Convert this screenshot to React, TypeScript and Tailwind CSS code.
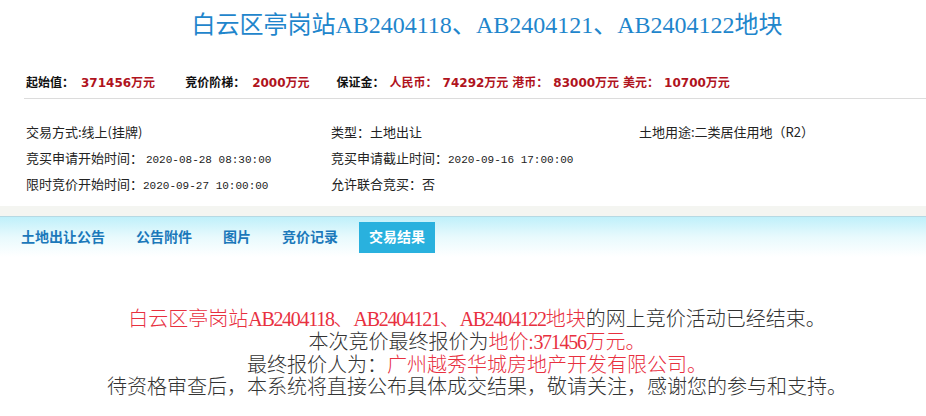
import React from "react";

const tabs = ["土地出让公告", "公告附件", "图片", "竞价记录"];

function Mono({ children }: { children: React.ReactNode }) {
  return <span className="font-['Liberation_Mono',monospace] text-[11px]">{children}</span>;
}

function Code({ children }: { children: React.ReactNode }) {
  return <span className="font-['Liberation_Serif',serif] tracking-[-1.3px]">{children}</span>;
}

function Val({ children }: { children: React.ReactNode }) {
  return <span className="ml-[7px] text-[#b0131d]">{children}</span>;
}

export default function App() {
  return (
    <div className="w-[926px] h-[416px] overflow-hidden bg-white font-['Noto_Sans_CJK_SC',sans-serif] text-[#222]">
      {/* title */}
      <div className="pl-[48px] pt-[7px] h-[52px] text-center text-[24px] leading-[32px] text-[#1f86cc]">
        白云区亭岗站<span className="font-['Liberation_Serif',serif]">AB2404118</span>、
        <span className="font-['Liberation_Serif',serif]">AB2404121</span>、
        <span className="font-['Liberation_Serif',serif]">AB2404122</span>地块
      </div>

      {/* margin row */}
      <div className="ml-[24px] pl-[2px] pt-[22px] pb-[6px] border-b border-[#dcdcdc] flex items-center text-[12px] leading-[18px] font-bold font-['DejaVu_Sans','Noto_Sans_CJK_SC',sans-serif]">
        <span className="text-[#111]">起始值：</span>
        <Val>371456万元</Val>
        <span className="ml-[30px] text-[#111]">竞价阶梯：</span>
        <Val>2000万元</Val>
        <span className="ml-[27px] text-[#111]">保证金：</span>
        <span className="ml-[5px] text-[#b0131d]">人民币：</span>
        <span className="ml-[5px] text-[#b0131d]">74292万元</span>
        <span className="ml-[4px] text-[#b0131d]">港币：</span>
        <span className="ml-[5px] text-[#b0131d]">83000万元</span>
        <span className="ml-[4px] text-[#b0131d]">美元：</span>
        <span className="ml-[5px] text-[#b0131d]">10700万元</span>
      </div>

      {/* info grid */}
      <div className="mt-[20px] pl-[26px] grid grid-cols-[305px_308px_1fr] auto-rows-[26px] items-center text-[13px] text-[#222]">
        <div>交易方式:线上(挂牌)</div>
        <div>类型：土地出让</div>
        <div>土地用途:二类居住用地（R2）</div>
        <div>竞买申请开始时间： <Mono>2020-08-28 08:30:00</Mono></div>
        <div>竞买申请截止时间：<Mono>2020-09-16 17:00:00</Mono></div>
        <div></div>
        <div>限时竞价开始时间：<Mono>2020-09-27 10:00:00</Mono></div>
        <div>允许联合竞买：否</div>
        <div></div>
      </div>

      {/* tab bar */}
      <div className="mt-[9px]">
        <div className="h-[11px] bg-[#f4f5f1] border-b border-[#b6d9e3]"></div>
        <div className="h-[40px] bg-gradient-to-b from-[#bff0fa] via-[#e8fafd] to-white pl-[11px] flex items-start gap-[11px] pt-[5px] text-[14px] font-bold">
          {tabs.map((t) => (
            <div key={t} className="px-[10px] h-[31px] leading-[29px] text-[#1b78ba]">{t}</div>
          ))}
          <div className="px-[10px] h-[31px] leading-[29px] bg-[#29b1de] text-white">交易结果</div>
        </div>
      </div>

      {/* result message */}
      <div className="mt-[50px] pl-[28px] text-center text-[20px] leading-[22px] text-[#333] font-light">
        <div>
          <span className="text-[#e8303f]">白云区亭岗站<Code>AB2404118</Code>、<Code>AB2404121</Code>、<Code>AB2404122</Code>地块</span>的网上竞价活动已经结束。
        </div>
        <div>
          本次竞价最终报价为<span className="text-[#e8303f]">地价:<Code>371456</Code>万元。</span>
        </div>
        <div>
          最终报价人为：<span className="text-[#e8303f]">广州越秀华城房地产开发有限公司。</span>
        </div>
        <div>待资格审查后，本系统将直接公布具体成交结果，敬请关注，感谢您的参与和支持。</div>
      </div>
    </div>
  );
}
